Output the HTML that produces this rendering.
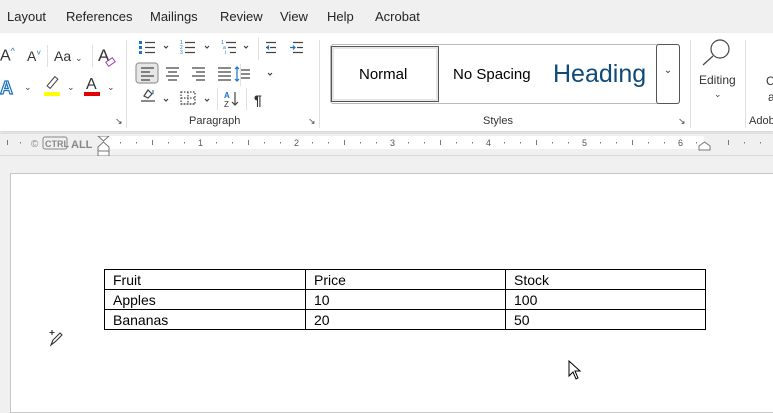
<!DOCTYPE html>
<html><head><meta charset="utf-8"><style>
*{margin:0;padding:0;box-sizing:border-box}
body{width:773px;height:405px;overflow:hidden;background:#f0f0f0;font-family:"Segoe UI","Liberation Sans",sans-serif;color:#242424;position:relative}
.a{position:absolute;white-space:nowrap}
.tab{top:9px;font-size:13px;color:#242424}
.rib{left:0;top:33px;width:773px;height:98px;background:#fff;box-shadow:0 1px 2px rgba(0,0,0,.15)}
.sep{width:1px;background:#e0e0e0}
.lbl{font-size:11px;color:#333;top:115px}
.chev{font-size:9px;color:#444}
td{border:1px solid #000;font-family:"Liberation Sans",sans-serif;font-size:14px;color:#000;padding:0 8px;height:20px;line-height:18px}
</style></head><body>
<div class="a tab" style="left:7px">Layout</div>
<div class="a tab" style="left:66px">References</div>
<div class="a tab" style="left:150px">Mailings</div>
<div class="a tab" style="left:220px">Review</div>
<div class="a tab" style="left:280px">View</div>
<div class="a tab" style="left:327px">Help</div>
<div class="a tab" style="left:375px">Acrobat</div>

<div class="a rib"></div>
<div class="a" style="left:0;top:46px;font-size:16px;color:#333">A<sup style="font-size:9px;color:#1a73c7">^</sup></div>
<div class="a" style="left:27px;top:48px;font-size:14px;color:#333">A<sup style="font-size:8px;color:#1a73c7">˅</sup></div>
<div class="a sep" style="left:47px;top:45px;height:22px"></div>
<div class="a" style="left:54px;top:48px;font-size:14px;color:#333">Aa <span class="chev">⌄</span></div>
<div class="a sep" style="left:92px;top:45px;height:22px"></div>
<div class="a" style="left:98px;top:46px;font-size:17px;color:#333">A</div>
<div class="a" style="left:106px;top:59px;width:9px;height:6px;border:1.5px solid #a23fb8;transform:rotate(-35deg)"></div>
<div class="a" style="left:0;top:78px;font-size:18px;font-weight:bold;color:#fff;-webkit-text-stroke:1.2px #1b6fc2">A</div>
<div class="a chev" style="left:24px;top:82px">⌄</div>
<div class="a" style="left:44px;top:92px;width:16px;height:4px;background:#ffff00"></div>
<div class="a" style="left:50px;top:76px;width:5px;height:13px;border:1.2px solid #444;transform:rotate(40deg)"></div>
<div class="a chev" style="left:67px;top:82px">⌄</div>
<div class="a" style="left:86px;top:76px;font-size:16px;color:#333">A</div>
<div class="a" style="left:84px;top:92px;width:16px;height:4px;background:#e00000"></div>
<div class="a chev" style="left:107px;top:82px">⌄</div>
<div class="a" style="left:115px;top:116px;font-size:9px;color:#444">↘</div>
<div class="a sep" style="left:126px;top:40px;height:88px"></div>

<svg class="a" style="left:135px;top:38px" width="180" height="72" viewBox="0 0 180 72" fill="none" stroke="#444" stroke-width="1.2">
<g fill="#1a73c7" stroke="none"><rect x="4" y="3" width="3" height="3"/><rect x="4" y="8" width="3" height="3"/><rect x="4" y="13" width="3" height="3"/></g>
<path d="M10 4.5h10M10 9.5h10M10 14.5h10"/>
<path d="M29 8l2 2 2-2M70 8l2 2 2-2M109 8l2 2 2-2" />
<g fill="#1a73c7" stroke="none" font-size="5" font-family="Liberation Sans"><text x="45" y="6">1</text><text x="45" y="11">2</text><text x="45" y="16">3</text><text x="86" y="6">1</text><text x="88" y="11">a</text><text x="90" y="16">i</text></g>
<path d="M50 4.5h10M50 9.5h10M50 14.5h10M91 4.5h10M93 9.5h8M95 14.5h6"/>
<path d="M131 4.5h10M135 9.5h6M131 14.5h10M131 9.5h3" /><path d="M134 7.5l-2 2 2 2" stroke="#1a73c7"/>
<path d="M158 4.5h10M162 9.5h6M158 14.5h10"/><path d="M155 9.5h5M158 7.5l2 2-2 2" stroke="#1a73c7"/>
<rect x="1" y="25" width="22" height="20" rx="3" fill="#e6e6e6" stroke="#999"/>
<path d="M6 30h13M6 34h9M6 38h13M6 42h9"/>
<path d="M31 30h13M33 34h9M31 38h13M33 42h9"/>
<path d="M57 30h13M61 34h9M57 38h13M61 42h9"/>
<path d="M83 30h13M83 34h13M83 38h13M83 42h13"/>
<path d="M106 32h9M106 36h9M106 40h9"/><path d="M102 29v14M100 31l2-2 2 2M100 41l2 2 2-2" stroke="#1a73c7"/>
<path d="M133 35l2 2 2-2"/>
<path d="M6 63h14M9 58l4-6 4 4-4 4z"/><path d="M18 52v4" stroke="#1a73c7"/>
<path d="M29 61l2 2 2-2M70 61l2 2 2-2"/>
<rect x="46" y="54" width="14" height="12" stroke-dasharray="1.5 1.5"/><path d="M46 66h14M53 54v12M46 60h14" stroke-dasharray="1.5 1.5"/>
<g fill="#1a73c7" stroke="none" font-size="8" font-family="Liberation Sans" font-weight="bold"><text x="89" y="60">A</text></g>
<g fill="#333" stroke="none" font-size="8" font-family="Liberation Sans"><text x="89" y="69">Z</text></g>
<path d="M100 54v13M97 64l3 3 3-3"/>
<g fill="#333" stroke="none" font-size="14" font-weight="bold" font-family="Liberation Sans"><text x="119" y="67">¶</text></g>
</svg>
<div class="a sep" style="left:258px;top:38px;height:22px"></div>
<div class="a sep" style="left:240px;top:64px;height:22px"></div>
<div class="a sep" style="left:217px;top:88px;height:22px"></div>
<div class="a sep" style="left:246px;top:88px;height:22px"></div>
<div class="a lbl" style="left:189px">Paragraph</div>
<div class="a" style="left:308px;top:116px;font-size:9px;color:#444">↘</div>
<div class="a sep" style="left:319px;top:40px;height:88px"></div>

<div class="a" style="left:330px;top:44px;width:350px;height:60px;border:1px solid #bbb;border-radius:3px"></div>
<div class="a" style="left:331px;top:46px;width:108px;height:56px;border:1px solid #555;outline:2px solid #e6e6e6;outline-offset:-3px"></div>
<div class="a" style="left:359px;top:66px;font-size:15px;color:#000">Normal</div>
<div class="a" style="left:453px;top:66px;font-size:15px;color:#000">No Spacing</div>
<div class="a" style="left:553px;top:60px;font-size:25px;color:#0e4a7a">Heading</div>
<div class="a" style="left:656px;top:44px;width:24px;height:60px;border:1px solid #555;border-radius:3px;font-size:10px;text-align:center;padding-top:20px;color:#333">⌄</div>
<div class="a lbl" style="left:483px">Styles</div>
<div class="a" style="left:678px;top:116px;font-size:9px;color:#444">↘</div>
<div class="a sep" style="left:690px;top:40px;height:88px"></div>
<svg class="a" style="left:700px;top:38px" width="36" height="28" fill="none" stroke="#444" stroke-width="1.2"><circle cx="20" cy="11" r="9"/><path d="M13 18L3 27"/></svg>
<div class="a" style="left:699px;top:73px;font-size:12px;color:#333">Editing</div>
<div class="a chev" style="left:714px;top:89px">⌄</div>
<div class="a sep" style="left:745px;top:40px;height:88px"></div>
<div class="a" style="left:766px;top:74px;font-size:12px;color:#333">C</div>
<div class="a" style="left:768px;top:90px;font-size:12px;color:#333">a</div>
<div class="a lbl" style="left:749px">Adob</div>

<div class="a" style="left:0;top:133px;width:773px;height:1px;background:#ddd"></div>
<div class="a" style="left:104px;top:136px;width:600px;height:13px;background:#fff"></div>
<div class="a" style="left:0;top:155px;width:773px;height:1px;background:#d8d8d8"></div>
<svg class="a" style="left:0;top:136px" width="773" height="20" font-family="Liberation Sans" font-size="9" fill="#555">
<g fill="#777"><rect x="7" y="4" width="1" height="5"/><rect x="20" y="6" width="1" height="1.5"/>
<rect x="120" y="6" width="1" height="1.5"/><rect x="136" y="6" width="1" height="1.5"/><rect x="152" y="4" width="1" height="5"/><rect x="168" y="6" width="1" height="1.5"/><rect x="184" y="6" width="1" height="1.5"/>
<rect x="216" y="6" width="1" height="1.5"/><rect x="232" y="6" width="1" height="1.5"/><rect x="248" y="4" width="1" height="5"/><rect x="264" y="6" width="1" height="1.5"/><rect x="280" y="6" width="1" height="1.5"/>
<rect x="312" y="6" width="1" height="1.5"/><rect x="328" y="6" width="1" height="1.5"/><rect x="344" y="4" width="1" height="5"/><rect x="360" y="6" width="1" height="1.5"/><rect x="376" y="6" width="1" height="1.5"/>
<rect x="408" y="6" width="1" height="1.5"/><rect x="424" y="6" width="1" height="1.5"/><rect x="440" y="4" width="1" height="5"/><rect x="456" y="6" width="1" height="1.5"/><rect x="472" y="6" width="1" height="1.5"/>
<rect x="504" y="6" width="1" height="1.5"/><rect x="520" y="6" width="1" height="1.5"/><rect x="536" y="4" width="1" height="5"/><rect x="552" y="6" width="1" height="1.5"/><rect x="568" y="6" width="1" height="1.5"/>
<rect x="600" y="6" width="1" height="1.5"/><rect x="616" y="6" width="1" height="1.5"/><rect x="632" y="4" width="1" height="5"/><rect x="648" y="6" width="1" height="1.5"/><rect x="664" y="6" width="1" height="1.5"/>
<rect x="696" y="6" width="1" height="1.5"/><rect x="728" y="4" width="1" height="5"/><rect x="744" y="6" width="1" height="1.5"/><rect x="760" y="6" width="1" height="1.5"/></g>
<text x="198" y="10">1</text><text x="294" y="10">2</text><text x="390" y="10">3</text><text x="486" y="10">4</text><text x="582" y="10">5</text><text x="678" y="10">6</text>
<text x="31" y="11" font-size="10" fill="#888">©</text>
<rect x="43" y="1" width="24" height="12" rx="2" fill="none" stroke="#888"/><text x="45" y="11" font-size="9" font-weight="bold" fill="#888">CTRL</text>
<text x="71" y="12" font-size="11" font-weight="bold" fill="#888">ALL</text>
<path d="M98 0h11l-5.5 5zM98 11l5.5-5 5.5 5v4H98z" fill="#fff" stroke="#777"/><rect x="98" y="15" width="11" height="5" fill="#fff" stroke="#777"/>
<path d="M699 14v-4l5.5-4 5.5 4v4z" fill="#fff" stroke="#777"/>
</svg>

<div class="a" style="left:10px;top:173px;width:770px;height:240px;background:#fff;border:1px solid #c6c6c6"></div>
<table class="a" style="left:104px;top:269px;width:602px;border-collapse:collapse">
<tr><td style="width:201px">Fruit</td><td style="width:200px">Price</td><td>Stock</td></tr>
<tr><td>Apples</td><td>10</td><td>100</td></tr>
<tr><td>Bananas</td><td>20</td><td>50</td></tr>
</table>
<svg class="a" style="left:47px;top:329px" width="20" height="18" fill="none" stroke="#333" stroke-width="1.1"><path d="M4 16l2-5 7-7 2 2-7 7z"/><path d="M5 1v5M2.5 3.5h5" /></svg>
<svg class="a" style="left:568px;top:360px" width="14" height="22"><path d="M1 1v15l4-4 3 7 2-1-3-7h5z" fill="#fff" stroke="#000"/></svg>
</body></html>
